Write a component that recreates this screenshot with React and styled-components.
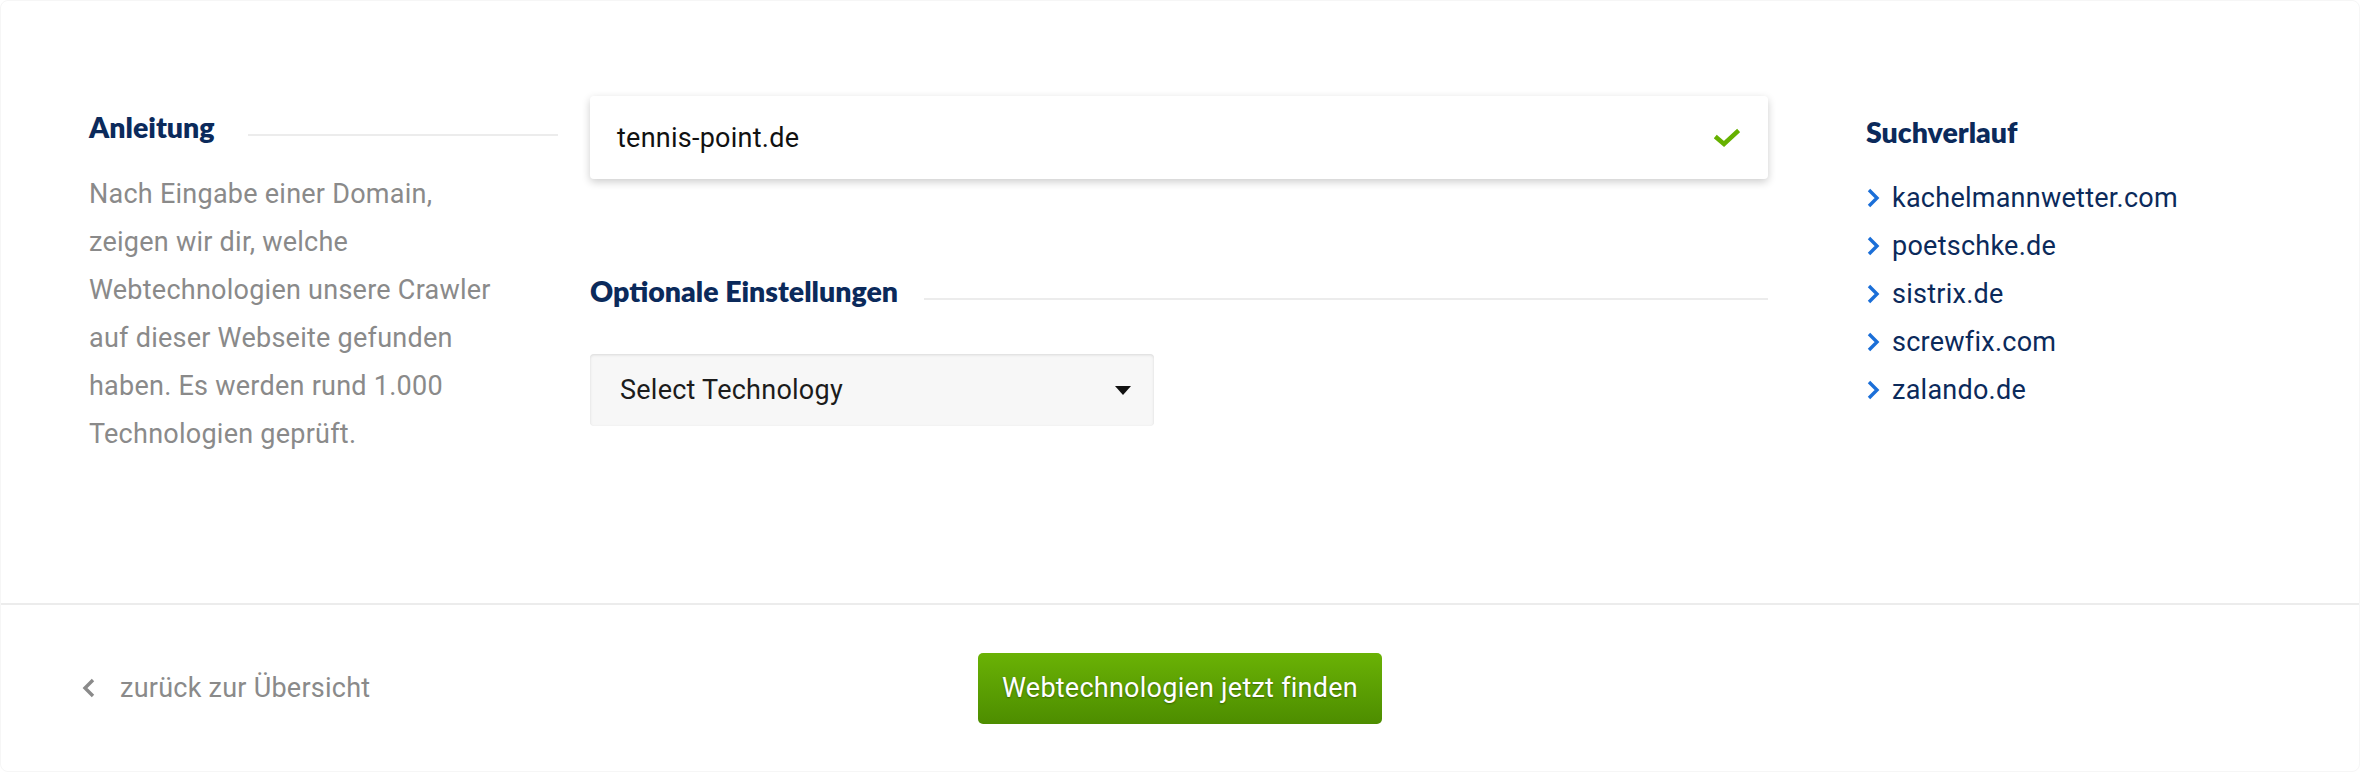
import React from 'react'
import styled, { createGlobalStyle } from 'styled-components'

const COLORS = {
  NAVY: '#0b2a5b',
  GRAY: '#8a8a8a',
  LINE: '#ececec',
  BLUE: '#1b6fd8',
  GREEN: '#66b100',
}

const GlobalStyle = createGlobalStyle`
  html, body {
    margin: 0;
    padding: 0;
    background: #ffffff;
  }
  body {
    font-family: Roboto, "Liberation Sans", Arial, sans-serif;
  }
  * {
    box-sizing: border-box;
  }
`

const Card = styled.div`
  display: flex;
  flex-direction: column;
  width: 100%;
  height: 772px;
  background: #ffffff;
  border: 1px solid #f6f6f6;
  border-radius: 8px;
  overflow: hidden;
`

const Top = styled.div`
  display: grid;
  grid-template-columns: 469px 1178px 1fr;
  column-gap: 32px;
  height: 602px;
  padding: 95px 88px 0 88px;
`

const Column = styled.div`
  display: flex;
  flex-direction: column;
  padding-left: ${({ indent }) => indent || 0}px;
`

const HeadingRow = styled.div`
  display: flex;
  align-items: center;
  gap: ${({ gap }) => gap || 30}px;
  margin-top: ${({ mt }) => mt || 0}px;
`

const Heading = styled.h2`
  margin: 0;
  font-family: Lato, "Noto Sans", sans-serif;
  font-weight: 800;
  font-size: 28.5px;
  line-height: 1.2;
  color: ${COLORS.NAVY};
  white-space: nowrap;
`

const Rule = styled.div`
  flex: 1;
  height: 2px;
  margin-top: 16px;
  background: ${COLORS.LINE};
`

const Paragraph = styled.p`
  margin: 26px 0 0 0;
  max-width: 420px;
  font-size: 27px;
  letter-spacing: 0.25px;
  line-height: 48px;
  color: ${COLORS.GRAY};
`

const DomainBox = styled.div`
  display: flex;
  align-items: center;
  justify-content: space-between;
  height: 83px;
  padding: 0 28px 0 27px;
  background: #ffffff;
  border-radius: 4px;
  box-shadow: 0 3px 8px rgba(0, 0, 0, 0.2);
  font-size: 27px;
  letter-spacing: 0.25px;
  color: #111111;
`

const SelectBox = styled.div`
  display: flex;
  align-items: center;
  justify-content: space-between;
  width: 564px;
  height: 72px;
  margin-top: 46px;
  padding: 0 23px 0 30px;
  background: #f7f7f7;
  border-radius: 4px;
  box-shadow: inset 0 1px 3px rgba(0, 0, 0, 0.12);
  font-size: 27px;
  letter-spacing: 0.25px;
  color: #1c1c1c;
`

const Caret = styled.span`
  width: 0;
  height: 0;
  border-left: 8px solid transparent;
  border-right: 8px solid transparent;
  border-top: 9px solid #111111;
`

const HistoryList = styled.ul`
  list-style: none;
  margin: 25px 0 0 0;
  padding: 0;
`

const HistoryItem = styled.li`
  display: flex;
  align-items: center;
  gap: 12px;
  font-size: 27px;
  letter-spacing: 0.25px;
  line-height: 48px;
  color: ${COLORS.NAVY};
`

const Footer = styled.div`
  display: grid;
  grid-template-columns: 1fr auto 1fr;
  align-items: center;
  flex: 1;
  padding: 0 81px;
  border-top: 2px solid ${COLORS.LINE};
`

const BackLink = styled.a`
  display: flex;
  align-items: center;
  gap: 24px;
  font-size: 27px;
  letter-spacing: 0.25px;
  color: ${COLORS.GRAY};
  text-decoration: none;
`

const Button = styled.button`
  height: 71px;
  padding: 0 24px;
  border: none;
  border-radius: 5px;
  background: linear-gradient(to bottom, #6ab205, #4d8d00);
  color: #ffffff;
  font-family: Roboto, "Liberation Sans", Arial, sans-serif;
  font-size: 27px;
  letter-spacing: 0.25px;
  text-shadow: 0 1px 2px rgba(0, 0, 0, 0.35);
  cursor: pointer;
`

const Check = () => (
  <svg width="26" height="20" viewBox="0 0 26 20">
    <polyline
      points="3,10 10,16 23,4"
      fill="none"
      stroke={COLORS.GREEN}
      strokeWidth="4.5"
      strokeLinecap="square"
    />
  </svg>
)

const Chevron = ({ color, left }) => (
  <svg width="14" height="20" viewBox="0 0 14 20">
    <polyline
      points={left ? '11,2 3,10 11,18' : '3,2 11,10 3,18'}
      fill="none"
      stroke={color}
      strokeWidth="3.4"
    />
  </svg>
)

const HISTORY = [
  'kachelmannwetter.com',
  'poetschke.de',
  'sistrix.de',
  'screwfix.com',
  'zalando.de',
]

const App = () => (
  <>
    <GlobalStyle />
    <Card>
      <Top>
        <Column>
          <HeadingRow mt={14} gap={33}>
            <Heading>Anleitung</Heading>
            <Rule />
          </HeadingRow>
          <Paragraph>
            Nach Eingabe einer Domain, zeigen wir dir, welche Webtechnologien
            unsere Crawler auf dieser Webseite gefunden haben. Es werden rund
            1.000 Technologien geprüft.
          </Paragraph>
        </Column>
        <Column>
          <DomainBox>
            <span>tennis-point.de</span>
            <Check />
          </DomainBox>
          <HeadingRow mt={95} gap={26}>
            <Heading>Optionale Einstellungen</Heading>
            <Rule />
          </HeadingRow>
          <SelectBox>
            <span>Select Technology</span>
            <Caret />
          </SelectBox>
        </Column>
        <Column indent={66}>
          <HeadingRow mt={19}>
            <Heading>Suchverlauf</Heading>
          </HeadingRow>
          <HistoryList>
            {HISTORY.map((domain) => (
              <HistoryItem key={domain}>
                <Chevron color={COLORS.BLUE} />
                {domain}
              </HistoryItem>
            ))}
          </HistoryList>
        </Column>
      </Top>
      <Footer>
        <BackLink href="#">
          <Chevron color={COLORS.GRAY} left />
          zurück zur Übersicht
        </BackLink>
        <Button>Webtechnologien jetzt finden</Button>
        <span />
      </Footer>
    </Card>
  </>
)

export default App
